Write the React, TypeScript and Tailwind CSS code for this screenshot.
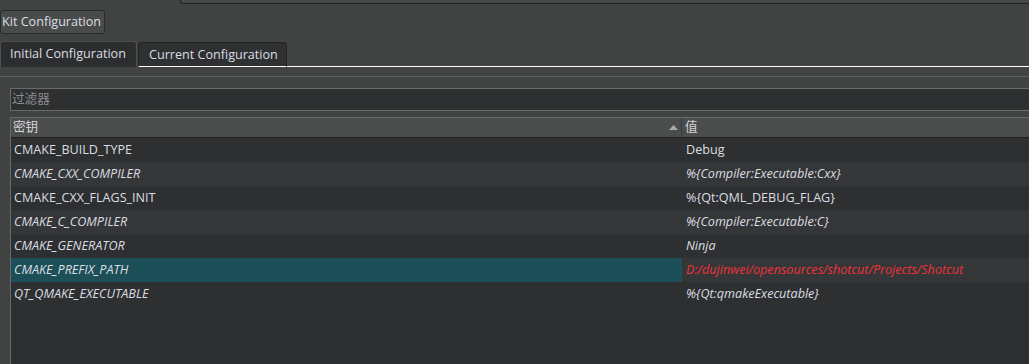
const rows = [
  { key: 'CMAKE_BUILD_TYPE', value: 'Debug', italic: false },
  { key: 'CMAKE_CXX_COMPILER', value: '%{Compiler:Executable:Cxx}', italic: true },
  { key: 'CMAKE_CXX_FLAGS_INIT', value: '%{Qt:QML_DEBUG_FLAG}', italic: false },
  { key: 'CMAKE_C_COMPILER', value: '%{Compiler:Executable:C}', italic: true },
  { key: 'CMAKE_GENERATOR', value: 'Ninja', italic: true },
  { key: 'CMAKE_PREFIX_PATH', value: 'D:/dujinwei/opensources/shotcut/Projects/Shotcut', italic: true, selected: true, changed: true },
  { key: 'QT_QMAKE_EXECUTABLE', value: '%{Qt:qmakeExecutable}', italic: true },
];

export default function App() {
  return (
    <div className="w-[1029px] h-[364px] overflow-hidden bg-[#414342] text-[12.6px] text-[#dadee2] font-['Open_Sans','Noto_Sans_CJK_SC',sans-serif] flex flex-col">
      {/* bottom edge of the widget above */}
      <div className="h-[4px] ml-[180px] bg-[#474948] border-b border-l border-[#222323] rounded-bl-[3px]" />

      <div className="mt-[6px] flex">
        <button className="h-[24px] w-[105px] pl-[1px] text-left rounded-[3px] border border-[#2a2b2b] bg-[#4a4c4b] text-[#dcdfe2]">
          Kit Configuration
        </button>
      </div>

      {/* tabs */}
      <div className="mt-[7px] flex items-end h-[26px]">
        <div className="h-[26px] w-[137px] pl-[9px] pt-[3px] rounded-t-[3px] border border-b-0 border-[#4d4f4e] bg-[#2c2d2e]">
          Initial Configuration
        </div>
        <div className="h-[25px] w-[149px] ml-[1px] pl-[10px] pt-[3px] rounded-t-[3px] border border-[#222323] border-b-white bg-[#2e3031]">
          Current Configuration
        </div>
        <div className="flex-1 h-[25px] border-b border-white" />
      </div>

      <div className="mt-[9px] border-t border-[#5c5e5d] flex-1 flex flex-col pl-[10px]">
        {/* filter */}
        <div className="mt-[11px] h-[23px] border border-[#6a6c6b] border-r-0 bg-[#2e2f31] pl-[1px] flex items-center text-[#8b8d8e]">
          过滤器
        </div>

        {/* table */}
        <div className="mt-[6px] flex-1 border-l border-t border-[#6a6c6b] bg-[#2e2f31] flex flex-col">
          <div className="h-[20px] flex bg-[#4b4c4c] border-b border-[#222] text-[#d4d6d8]">
            <div className="w-[670px] pl-[2px] flex items-center relative">
              密钥
              <svg className="absolute right-[3px] top-[7px]" width="9" height="5" viewBox="0 0 9 5">
                <path d="M0 5 L4.5 0 L9 5 Z" fill="#a8aaab" />
              </svg>
            </div>
            <div className="w-px bg-[#3a3b3b]" />
            <div className="flex-1 pl-[3px] flex items-center">值</div>
          </div>

          {rows.map((r, i) => (
            <div
              key={r.key}
              className={`h-[24px] flex items-center ${i % 2 === 1 ? 'bg-[#353638]' : 'bg-[#2e2f31]'} ${r.italic ? 'italic' : ''}`}
            >
              <div className={`w-[671px] h-full pl-[3px] flex items-center ${r.selected ? 'bg-[#1c4f57]' : ''}`}>
                {r.key}
              </div>
              <div className={`flex-1 pl-[4px] ${r.changed ? 'text-[#f0323a]' : ''}`}>{r.value}</div>
            </div>
          ))}
        </div>
      </div>
    </div>
  );
}
